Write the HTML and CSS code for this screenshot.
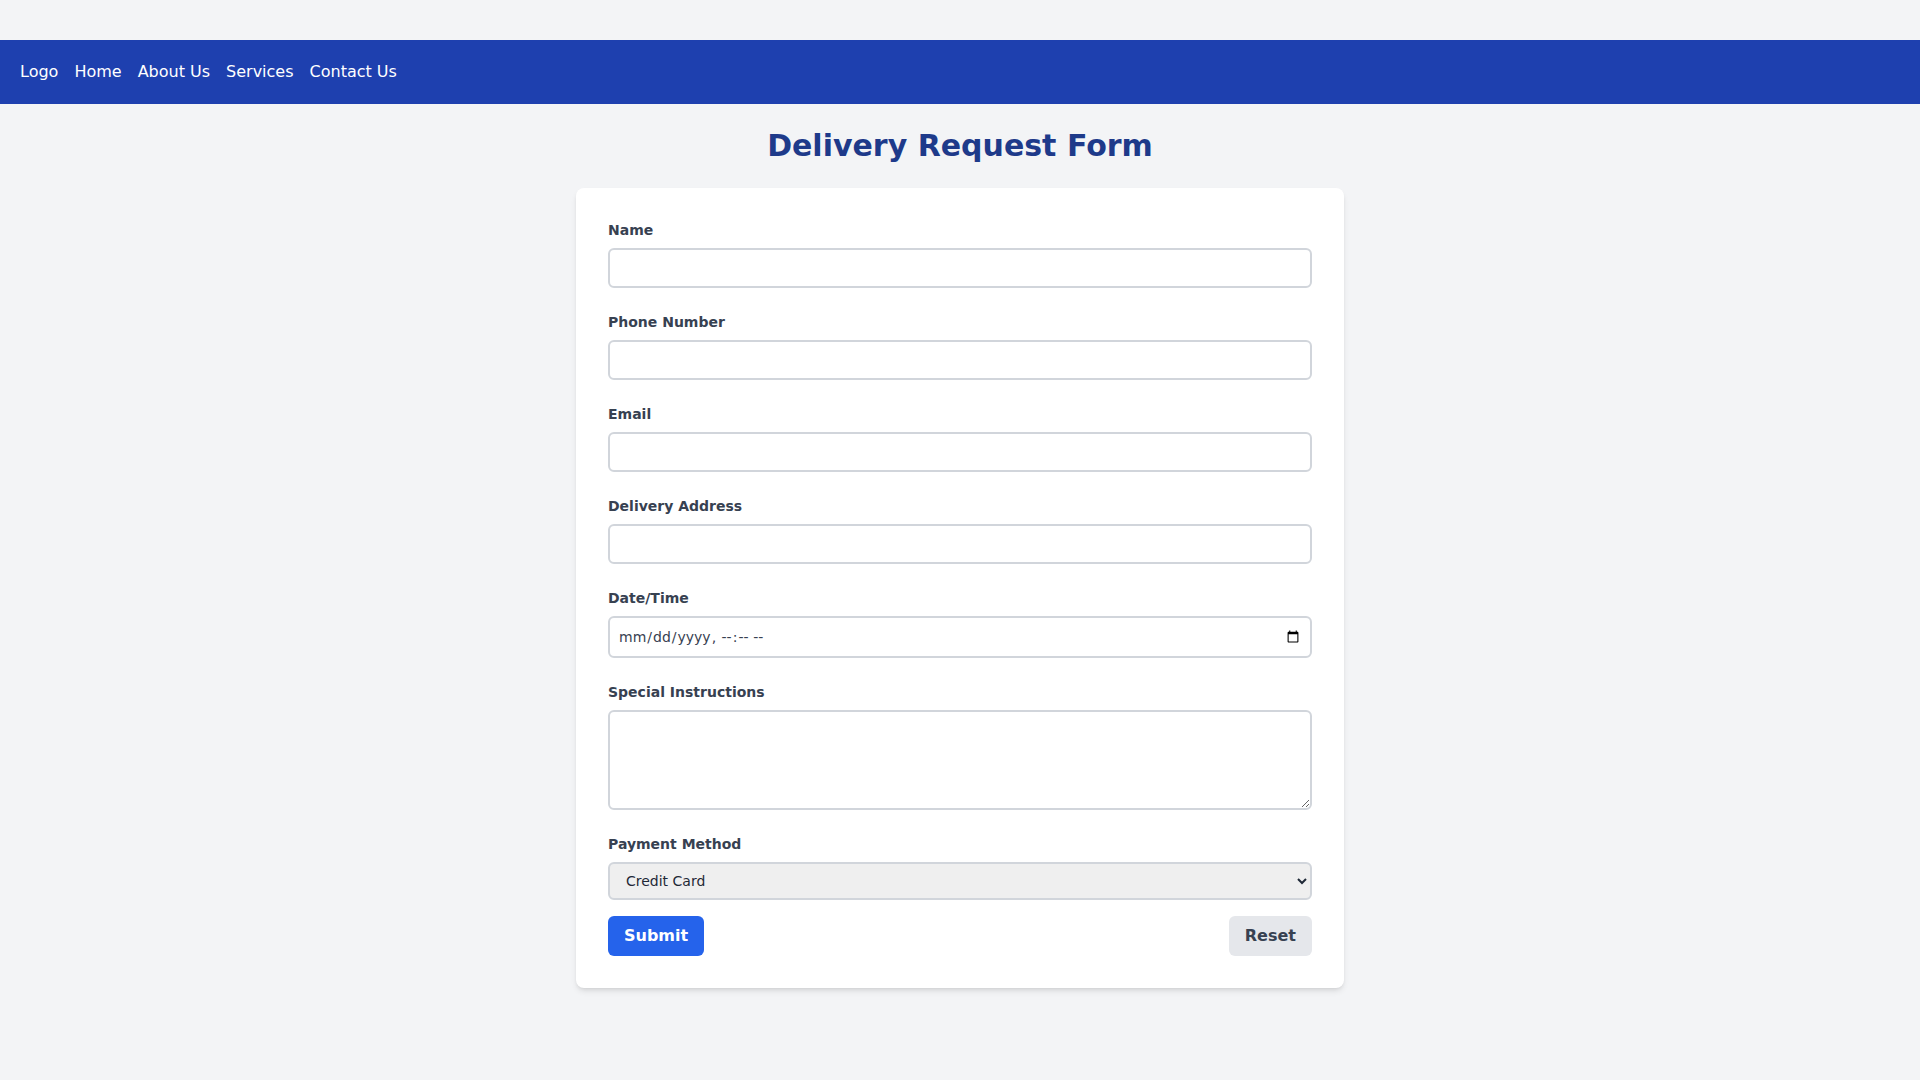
FILE: index.html
```html
<!DOCTYPE html>
<html lang="en">
<head>
<meta charset="utf-8">
<title>Delivery Request Form</title>
<link rel="stylesheet" href="styles.css">
</head>
<body>
<nav class="topnav">
  <ul class="nav-list">
    <li><a href="#">Logo</a></li>
    <li><a href="#">Home</a></li>
    <li><a href="#">About Us</a></li>
    <li><a href="#">Services</a></li>
    <li><a href="#">Contact Us</a></li>
  </ul>
</nav>
<main class="main">
  <h1 class="title">Delivery Request Form</h1>
  <form class="card">
    <div class="field">
      <label class="label" for="name">Name</label>
      <input class="input" id="name" type="text">
    </div>
    <div class="field">
      <label class="label" for="phone">Phone Number</label>
      <input class="input" id="phone" type="tel">
    </div>
    <div class="field">
      <label class="label" for="email">Email</label>
      <input class="input" id="email" type="email">
    </div>
    <div class="field">
      <label class="label" for="address">Delivery Address</label>
      <input class="input" id="address" type="text">
    </div>
    <div class="field">
      <label class="label" for="dt">Date/Time</label>
      <input class="input input-date" id="dt" type="datetime-local">
    </div>
    <div class="field">
      <label class="label" for="notes">Special Instructions</label>
      <textarea class="input textarea" id="notes"></textarea>
    </div>
    <div class="field field-last">
      <label class="label" for="pay">Payment Method</label>
      <select class="select" id="pay">
        <option>Credit Card</option>
        <option>Cash</option>
        <option>PayPal</option>
      </select>
    </div>
    <div class="actions">
      <button type="submit" class="btn btn-primary">Submit</button>
      <button type="reset" class="btn btn-secondary">Reset</button>
    </div>
  </form>
</main>
</body>
</html>
```

FILE: styles.css
```css
* {
  box-sizing: border-box;
}

html, body {
  margin: 0;
  padding: 0;
}

body {
  background: #f3f4f6;
  font-family: "DejaVu Sans", sans-serif;
  padding-top: 40px;
  min-height: 1080px;
}

.topnav {
  background: #1e40af;
  padding: 20px;
}

.nav-list {
  list-style: none;
  margin: 0;
  padding: 0;
  display: flex;
  gap: 16px;
}

.nav-list a {
  color: #ffffff;
  text-decoration: none;
  font-size: 16px;
  line-height: 24px;
  display: block;
}

.main {
  display: flex;
  flex-direction: column;
  align-items: center;
}

.title {
  margin: 24px 0 24px;
  font-size: 30px;
  line-height: 36px;
  font-weight: 700;
  color: #1e3a8a;
}

.card {
  width: 768px;
  background: #ffffff;
  border-radius: 8px;
  box-shadow: 0 4px 6px -1px rgba(0, 0, 0, 0.1), 0 2px 4px -2px rgba(0, 0, 0, 0.1);
  padding: 32px;
}

.field {
  margin-bottom: 24px;
}

.field-last {
  margin-bottom: 16px;
}

.label {
  display: block;
  font-size: 14px;
  line-height: 20px;
  font-weight: 700;
  color: #374151;
  margin-bottom: 8px;
}

.input {
  display: block;
  width: 100%;
  height: 40px;
  border: 2px solid #d1d5db;
  border-radius: 6px;
  padding: 0 12px;
  font-family: "DejaVu Sans", sans-serif;
  font-size: 14px;
  color: #374151;
  background: #ffffff;
  outline: none;
}

.input-date {
  height: 42px;
  padding: 0 8px;
}

.textarea {
  height: 100px;
  padding: 8px 12px;
  resize: vertical;
}

.select {
  display: block;
  width: 100%;
  height: 38px;
  border: 2px solid #d1d5db;
  border-radius: 6px;
  padding: 0 12px;
  font-family: "DejaVu Sans", sans-serif;
  font-size: 14px;
  color: #1f2937;
  background-color: #efefef;
}

.actions {
  display: flex;
  justify-content: space-between;
}

.btn {
  height: 40px;
  padding: 0 16px;
  border: none;
  border-radius: 6px;
  font-family: "DejaVu Sans", sans-serif;
  font-size: 16px;
  font-weight: 700;
  line-height: 24px;
  cursor: pointer;
}

.btn-primary {
  background: #2563eb;
  color: #ffffff;
}

.btn-secondary {
  background: #e5e7eb;
  color: #374151;
}
```
